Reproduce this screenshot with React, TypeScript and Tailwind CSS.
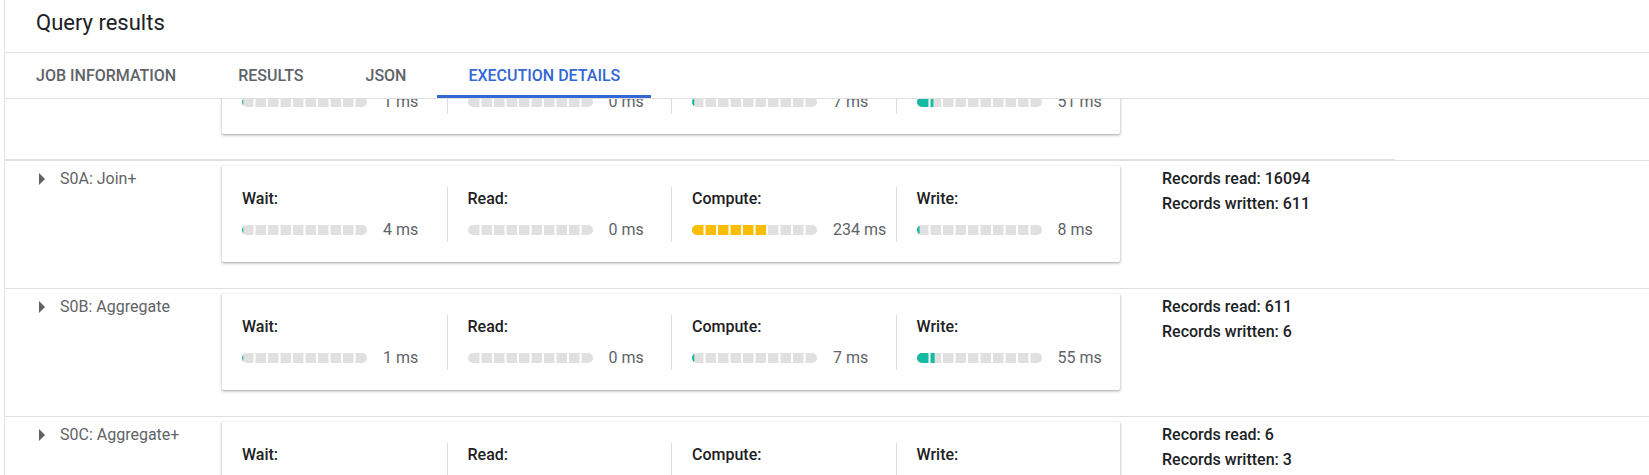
import React, { useId } from "react";

type Row = {
  name: string;
  vals: number[];
  colors: string[];
  read: number;
  written: number;
};

const TEAL = "#13b9a0";
const YELLOW = "#fbbc04";
const MAX = 390;

const rows: Row[] = [
  { name: "S09: Join+", vals: [1, 0, 7, 51], colors: [TEAL, TEAL, TEAL, TEAL], read: 16094, written: 16094 },
  { name: "S0A: Join+", vals: [4, 0, 234, 8], colors: [TEAL, TEAL, YELLOW, TEAL], read: 16094, written: 611 },
  { name: "S0B: Aggregate", vals: [1, 0, 7, 55], colors: [TEAL, TEAL, TEAL, TEAL], read: 611, written: 6 },
  { name: "S0C: Aggregate+", vals: [1, 0, 3, 2], colors: [TEAL, TEAL, TEAL, TEAL], read: 6, written: 3 },
];

const labels = ["Wait:", "Read:", "Compute:", "Write:"];

function Bar({ value, color }: { value: number; color: string }) {
  const id = useId().replace(/:/g, "");
  const w = value <= 0 ? 0 : Math.max(1.2, (value / MAX) * 125);
  return (
    <svg width="125" height="10" viewBox="0 0 125 10" className="block shrink-0">
      <defs>
        <clipPath id={`c${id}`}>
          <rect x="0" y="0" width="125" height="10" rx="5" ry="5" />
        </clipPath>
      </defs>
      <g clipPath={`url(#c${id})`}>
        <rect x="0" y="0" width="125" height="10" fill="#e0e0e0" />
        <rect x="0" y="0" width={w} height="10" fill={color} />
        {Array.from({ length: 9 }).map((_, i) => (
          <rect key={i} x={12.5 * (i + 1) - 1} y="0" width="2" height="10" fill="#ffffff" />
        ))}
      </g>
    </svg>
  );
}

function Arrow() {
  return (
    <svg width="24" height="24" viewBox="0 0 24 24" className="block shrink-0">
      <path d="M10 6L16 12L10 18Z" fill="#616161" />
    </svg>
  );
}

function StageRow({ row, first }: { row: Row; first: boolean }) {
  return (
    <>
      <div className={`flex pt-[5px] ${first ? "pb-[25px]" : "pb-[26px] border-b border-[#e0e0e0]"}`}>
        <div className="w-[217px] shrink-0 flex items-start pt-[1px] pl-[24px]">
          <Arrow />
          <span className="ml-[7px] text-[16px] leading-[24px] text-[#5f6368]">{row.name}</span>
        </div>
        <div className="w-[898px] h-[96px] shrink-0 bg-white rounded-[2px] shadow-[0_1px_2px_0_rgba(60,64,67,0.3),0_1px_3px_1px_rgba(60,64,67,0.15)] grid grid-cols-4 pt-[21px]">
          {labels.map((l, i) => (
            <div
              key={l}
              className={`h-[55px] pl-[20px] flex flex-col ${i > 0 ? "border-l border-[#dadce0]" : ""}`}
            >
              <div className="text-[16px] leading-[24px] font-medium text-[#202124]">{l}</div>
              <div className="mt-[7px] h-[24px] flex items-center gap-4">
                <Bar value={row.vals[i]} color={row.colors[i]} />
                <span className="text-[16px] leading-[24px] text-[#5f6368] whitespace-nowrap">
                  {row.vals[i]} ms
                </span>
              </div>
            </div>
          ))}
        </div>
        <div className="ml-[42px] pt-[1px] flex flex-col gap-[1px] text-[16px] leading-[24px] font-medium text-[#202124] whitespace-nowrap">
          <div>Records read: {row.read}</div>
          <div>Records written: {row.written}</div>
        </div>
      </div>
      {first && (
        <div className="flex h-[2px]">
          <div className="w-[1390px] bg-[#e0e0e0]" />
          <div className="flex-1 border-b border-[#e0e0e0]" />
        </div>
      )}
    </>
  );
}

export default function App() {
  const tabs = ["Job information", "Results", "JSON", "Execution details"];
  return (
    <div className="w-[1649px] h-[475px] overflow-hidden bg-white font-['Roboto',sans-serif] flex flex-col">
      <div className="ml-[4px] border-l border-[#e0e0e0] flex-1 flex flex-col min-h-0">
        <div className="h-[53px] shrink-0 border-b border-[#e0e0e0] pl-[31px] pt-[10px] text-[22px] leading-[26px] text-[#202124]">
          Query results
        </div>
        <div className="h-[46px] shrink-0 border-b border-[#e0e0e0] flex">
          {tabs.map((t, i) => {
            const active = i === 3;
            return (
              <div
                key={t}
                className={`h-full px-[31px] flex items-center border-t-[3px] border-b-[3px] border-t-transparent text-[16px] font-medium uppercase ${
                  active ? "text-[#3367d6] border-b-[#3367d6]" : "text-[#5f6368] border-b-transparent"
                }`}
              >
                {t}
              </div>
            );
          })}
        </div>
        <div className="flex-1 min-h-0 overflow-hidden">
          <div className="-mt-[66px]">
            {rows.map((r, i) => (
              <StageRow key={r.name} row={r} first={i === 0} />
            ))}
          </div>
        </div>
      </div>
    </div>
  );
}
